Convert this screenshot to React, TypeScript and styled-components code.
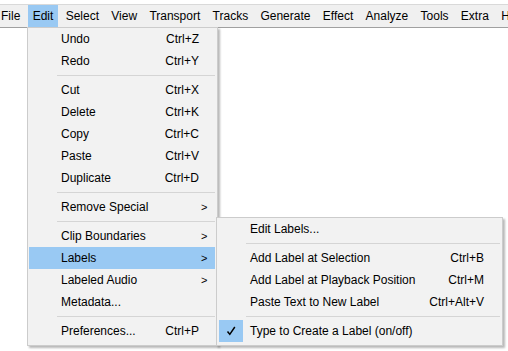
import styled, {createGlobalStyle} from 'styled-components'

type Entry = {
    label?: string
    shortcut?: string
    submenu?: boolean
    active?: boolean
    checked?: boolean
    separator?: boolean
}

const GlobalStyle = createGlobalStyle`
    html, body {
        margin: 0;
        padding: 0;
        background: #ffffff;
        font-family: "Liberation Sans", Arial, sans-serif;
        font-size: 12px;
        color: #000000;
    }
`

const Window = styled.div`
    position: relative;
    width: 508px;
    height: 351px;
    overflow: hidden;
    background: #ffffff;
    padding-top: 4px;
    box-sizing: border-box;
`

const MenuBar = styled.div`
    height: 22px;
    background: #f0f0f0;
    border-top: 1px solid #d9d9d9;
    border-bottom: 1px solid #a0a0a0;
    display: flex;
    align-items: stretch;
    gap: 2.3px;
    margin-left: -4px;
    white-space: nowrap;
`

const BarItem = styled.div<{$open?: boolean}>`
    display: flex;
    align-items: center;
    padding: 0 5px;
    background: ${(p) => (p.$open ? '#99c9f3' : 'transparent')};
`

const Menu = styled.div<{$left: number; $top: number; $width: number}>`
    position: absolute;
    left: ${(p) => p.$left}px;
    top: ${(p) => p.$top}px;
    width: ${(p) => p.$width}px;
    box-sizing: border-box;
    background: #f2f2f2;
    border: 1px solid #cccccc;
    box-shadow: 2px 2px 2px rgba(0, 0, 0, 0.28);
    padding: 0 2px 3px 1px;
`

const Item = styled.div<{$active?: boolean}>`
    height: 22px;
    display: flex;
    align-items: center;
    background: ${(p) => (p.$active ? '#99c9f3' : 'transparent')};
    color: #000000;
    white-space: nowrap;
`

const Check = styled.div<{$on?: boolean; $sub?: boolean}>`
    width: 24px;
    height: 22px;
    margin-left: ${(p) => (p.$sub ? 1 : 2)}px;
    margin-right: ${(p) => (p.$sub ? 7 : 6)}px;
    display: flex;
    align-items: center;
    justify-content: center;
    background: ${(p) => (p.$on ? '#99c9f3' : 'transparent')};
`

const Label = styled.span`
    flex: 1;
`

const Shortcut = styled.span`
    text-align: right;
`

const Arrow = styled.span`
    width: 16px;
    padding-left: 2px;
    box-sizing: border-box;
    font-size: 11px;
`

const Separator = styled.div<{$indent: number}>`
    height: 7px;
    display: flex;
    align-items: center;
    padding-left: ${(p) => p.$indent}px;

    &::after {
        content: '';
        flex: 1;
        height: 1px;
        background: #d5d5d5;
    }
`

const barItems = [
    'File',
    'Edit',
    'Select',
    'View',
    'Transport',
    'Tracks',
    'Generate',
    'Effect',
    'Analyze',
    'Tools',
    'Extra',
    'Help',
]

const editMenu: Entry[] = [
    {label: 'Undo', shortcut: 'Ctrl+Z'},
    {label: 'Redo', shortcut: 'Ctrl+Y'},
    {separator: true},
    {label: 'Cut', shortcut: 'Ctrl+X'},
    {label: 'Delete', shortcut: 'Ctrl+K'},
    {label: 'Copy', shortcut: 'Ctrl+C'},
    {label: 'Paste', shortcut: 'Ctrl+V'},
    {label: 'Duplicate', shortcut: 'Ctrl+D'},
    {separator: true},
    {label: 'Remove Special', submenu: true},
    {separator: true},
    {label: 'Clip Boundaries', submenu: true},
    {label: 'Labels', submenu: true, active: true},
    {label: 'Labeled Audio', submenu: true},
    {label: 'Metadata...'},
    {separator: true},
    {label: 'Preferences...', shortcut: 'Ctrl+P'},
]

const labelsMenu: Entry[] = [
    {label: 'Edit Labels...'},
    {separator: true},
    {label: 'Add Label at Selection', shortcut: 'Ctrl+B'},
    {label: 'Add Label at Playback Position', shortcut: 'Ctrl+M'},
    {label: 'Paste Text to New Label', shortcut: 'Ctrl+Alt+V'},
    {separator: true},
    {label: 'Type to Create a Label (on/off)', checked: true},
]

function CheckMark() {
    return (
        <svg width="12" height="12" viewBox="0 0 12 12">
            <path d="M2.5 6.5 L4.8 9.3 L9.8 2" fill="none" stroke="#000" strokeWidth="1.5" />
        </svg>
    )
}

function MenuRows({entries, sub}: {entries: Entry[]; sub?: boolean}) {
    return (
        <>
            {entries.map((entry, key) => {
                if (entry.separator) {
                    return <Separator key={key} $indent={28} />
                }
                return (
                    <Item key={key} $active={entry.active}>
                        <Check $on={entry.checked} $sub={sub}>
                            {entry.checked && <CheckMark />}
                        </Check>
                        <Label>{entry.label}</Label>
                        {entry.shortcut && <Shortcut>{entry.shortcut}</Shortcut>}
                        <Arrow>{entry.submenu ? '>' : ''}</Arrow>
                    </Item>
                )
            })}
        </>
    )
}

function App() {
    return (
        <Window>
            <GlobalStyle />
            <MenuBar>
                {barItems.map((name) => (
                    <BarItem key={name} $open={name === 'Edit'}>
                        {name}
                    </BarItem>
                ))}
            </MenuBar>

            <Menu $left={27} $top={27} $width={191}>
                <MenuRows entries={editMenu} />
            </Menu>

            <Menu $left={216} $top={217} $width={287}>
                <MenuRows entries={labelsMenu} sub />
            </Menu>
        </Window>
    )
}

export default App
